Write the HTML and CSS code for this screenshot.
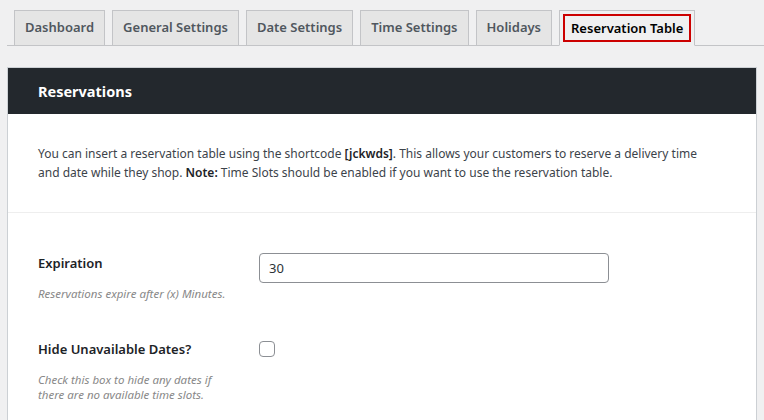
FILE: index.html
```html
<!DOCTYPE html>
<html lang="en">
  <head>
    <meta charset="UTF-8" />
    <meta name="viewport" content="width=device-width, initial-scale=1.0" />
    <title>Reservation Table</title>
    <link rel="stylesheet" href="styles.css">
  </head>
  <body>
    <nav class="tabs">
      <a class="tab" href="#">Dashboard</a>
      <a class="tab" href="#">General Settings</a>
      <a class="tab" href="#">Date Settings</a>
      <a class="tab" href="#">Time Settings</a>
      <a class="tab" href="#">Holidays</a>
      <a class="tab tab-active" href="#"><span>Reservation Table</span></a>
    </nav>

    <div class="panel">
      <h2 class="panel-title">Reservations</h2>
      <p class="intro">
        You can insert a reservation table using the shortcode <strong>[jckwds]</strong>. This allows your customers to reserve a delivery time<br>
        and date while they shop. <strong>Note:</strong> Time Slots should be enabled if you want to use the reservation table.
      </p>
      <div class="fields">
        <div class="field">
          <div class="field-label">
            <label for="expiration">Expiration</label>
            <p class="hint">Reservations expire after (x) Minutes.</p>
          </div>
          <div class="field-input">
            <input type="text" id="expiration" value="30">
          </div>
        </div>
        <div class="field">
          <div class="field-label">
            <label for="hide-dates">Hide Unavailable Dates?</label>
            <p class="hint">Check this box to hide any dates if there are no available time slots.</p>
          </div>
          <div class="field-input">
            <input type="checkbox" id="hide-dates" class="check">
          </div>
        </div>
      </div>
    </div>
  </body>
</html>
```

FILE: styles.css
```css
body {
  margin: 0;
  background-color: #f0f0f1;
  font-family: "Noto Sans", "Open Sans", sans-serif;
  font-size: 12px;
  color: #3c434a;
}

.tabs {
  display: flex;
  gap: 7px;
  margin-left: 7px;
  padding: 10px 0 0 7px;
  border-bottom: 1px solid #c3c4c7;
}

.tab {
  display: block;
  margin-bottom: -1px;
  padding: 4px 10px 5px;
  line-height: 25px;
  font-size: 13px;
  font-weight: 600;
  color: #50575e;
  text-decoration: none;
  background-color: #e5e5e5;
  border: 1px solid #c3c4c7;
}

.tab-active {
  padding: 3px 3px 3px;
  color: #000;
  background-color: #f0f0f1;
  border-bottom-color: #f0f0f1;
}

.tab-active span {
  display: block;
  padding: 0 6px;
  line-height: 24px;
  border: 2px solid #cc0000;
}

.panel {
  margin: 21px 7px 0 7px;
  background-color: #fff;
  border: 1px solid #ccd0d4;
}

.panel-title {
  margin: 0;
  padding: 0 30px;
  height: 46px;
  line-height: 46px;
  font-size: 14.5px;
  font-weight: 700;
  color: #fff;
  background-color: #23282d;
}

.intro {
  margin: 0;
  padding: 30px;
  line-height: 19px;
  border-bottom: 1px solid #eee;
}

.intro strong {
  font-weight: 600;
  color: #1d2327;
}

.fields {
  display: flex;
  flex-direction: column;
  gap: 38px;
  padding: 40px 30px 30px;
}

.field {
  display: grid;
  grid-template-columns: 200px 1fr;
  column-gap: 21px;
}

.field-label label {
  display: block;
  line-height: 20px;
  font-size: 13px;
  font-weight: 600;
  color: #1d2327;
}

.hint {
  margin: 13px 0 0;
  font-size: 11.5px;
  line-height: 15px;
  font-style: italic;
  color: #888;
}

.field-input input[type="text"] {
  box-sizing: border-box;
  width: 350px;
  height: 30px;
  padding: 0 9px;
  font-family: inherit;
  font-size: 13px;
  color: #2c3338;
  border: 1px solid #8c8f94;
  border-radius: 4px;
}

.check {
  appearance: none;
  display: block;
  margin: 2px 0 0;
  width: 16px;
  height: 16px;
  border: 1px solid #8c8f94;
  border-radius: 4px;
  background-color: #fff;
}
```
